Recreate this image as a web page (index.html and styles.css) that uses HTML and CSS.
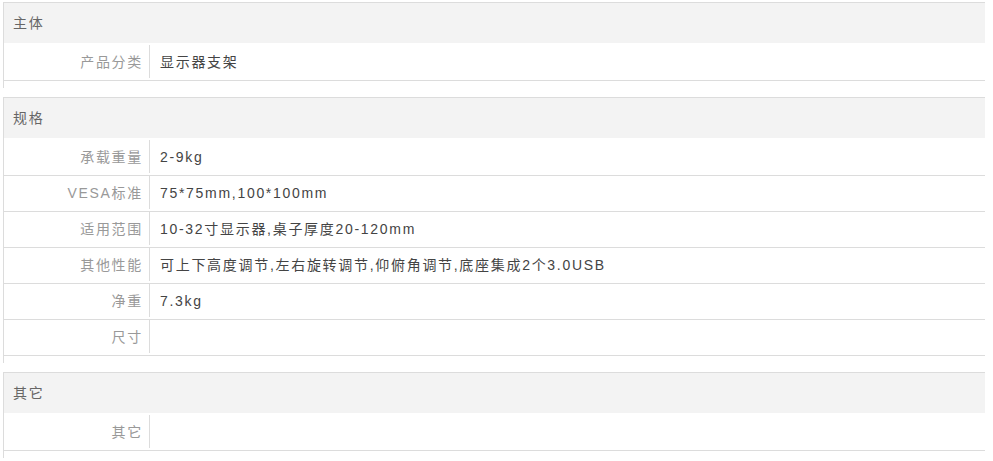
FILE: index.html
```html
<!DOCTYPE html>
<html lang="zh-CN">
<head>
<meta charset="utf-8">
<title>规格参数</title>
<link rel="stylesheet" href="styles.css">
</head>
<body>
<div class="section">
  <div class="section-title">主体</div>
  <div class="row"><div class="label">产品分类</div><div class="value">显示器支架</div></div>
</div>
<div class="section">
  <div class="section-title">规格</div>
  <div class="row"><div class="label">承载重量</div><div class="value">2-9kg</div></div>
  <div class="row"><div class="label">VESA标准</div><div class="value">75*75mm,100*100mm</div></div>
  <div class="row"><div class="label">适用范围</div><div class="value">10-32寸显示器,桌子厚度20-120mm</div></div>
  <div class="row"><div class="label">其他性能</div><div class="value">可上下高度调节,左右旋转调节,仰俯角调节,底座集成2个3.0USB</div></div>
  <div class="row"><div class="label">净重</div><div class="value">7.3kg</div></div>
  <div class="row"><div class="label">尺寸</div><div class="value"></div></div>
</div>
<div class="section">
  <div class="section-title">其它</div>
  <div class="row"><div class="label">其它</div><div class="value"></div></div>
</div>
</body>
</html>
```
FILE: styles.css
```css
html, body {
  background: #fff;
}
body {
  margin: 2px 8px 0 3px;
  font-family: "Liberation Sans", Arial, "Noto Sans CJK SC", sans-serif;
  font-size: 14px;
  letter-spacing: 1.7px;
}
.section {
  border-top: 1px solid #dcdcdc;
  border-left: 1px solid #dcdcdc;
  padding-bottom: 7px;
  margin-bottom: 9px;
}
.section-title {
  background: #f3f3f3;
  height: 40px;
  line-height: 40px;
  margin-bottom: 2px;
  padding-left: 9px;
  color: #666;
}
.row {
  display: flex;
  align-items: flex-start;
  box-sizing: border-box;
  height: 36px;
  border-bottom: 1px solid #dcdcdc;
}
.label {
  width: 139px;
  padding-right: 6px;
  height: 33px;
  line-height: 34px;
  text-align: right;
  color: #999;
  border-right: 1px solid #dcdcdc;
  flex: none;
}
.value {
  padding-left: 10px;
  color: #444;
  line-height: 34px;
}
```
